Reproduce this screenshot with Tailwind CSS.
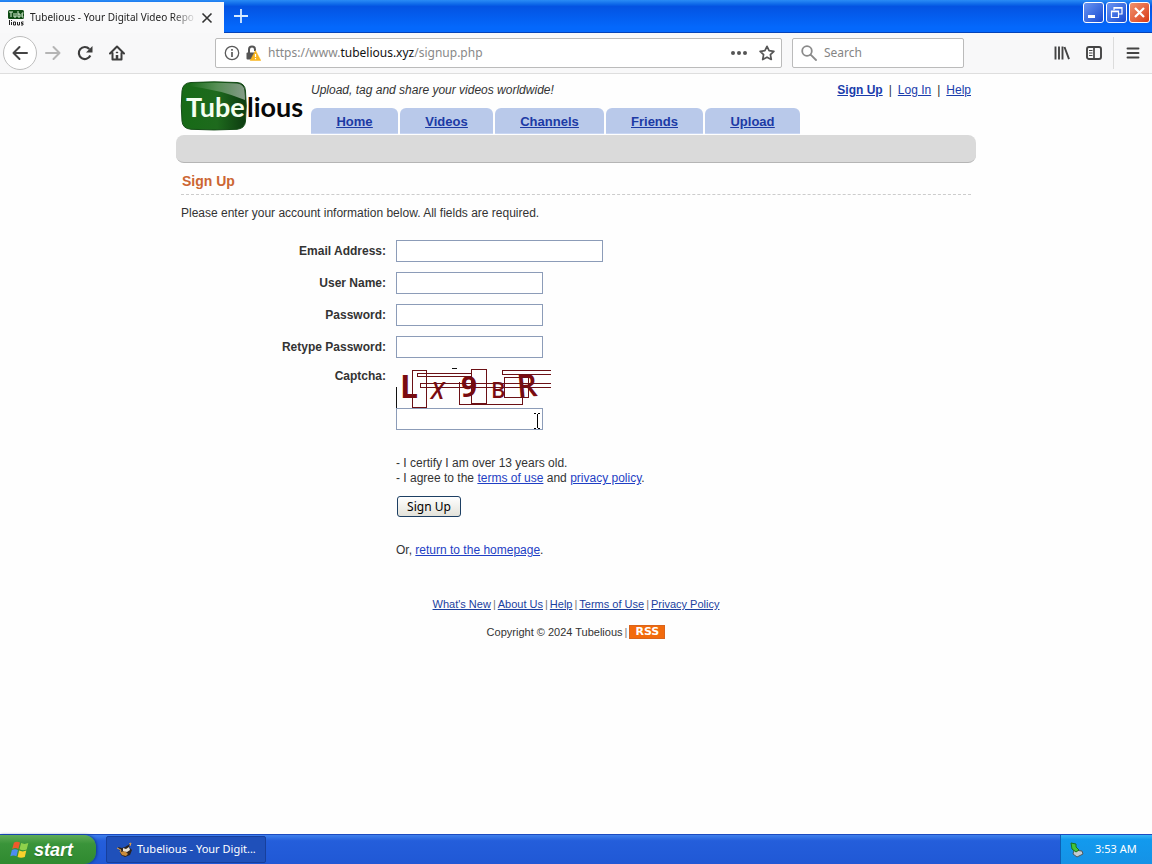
<!DOCTYPE html>
<html lang="en">
<head>
<meta charset="utf-8">
<meta name="viewport" content="width=device-width, initial-scale=1">
<title>Tubelious - Your Digital Video Repository</title>
<script src="https://cdn.jsdelivr.net/npm/@tailwindcss/browser@4"></script>
</head>
<body class="flex min-h-screen flex-col bg-[#fefefe] font-['Liberation_Sans',Arial,sans-serif] text-xs text-[#333]">

<!-- Browser window -->
<div class="flex h-[33px] items-stretch bg-linear-to-b from-[#2a8cf5] from-0% via-[#0453e2] via-20% to-[#0468fc] to-85% border-b border-[#0442b8] font-['Noto_Sans',sans-serif]">
  <div class="mt-0.5 -mb-px flex w-56 items-center bg-[#f9f9fa] pl-2">
    <svg class="h-4 w-4 shrink-0" viewBox="0 0 16 16" aria-hidden="true">
      <rect width="16" height="9" rx="1.5" fill="#0d4a12"/>
      <path d="M1 2h4M3 2v5M6 3v4h2V3M10 1v6h2V4h-2M15.500 7H14V3h1.500M14 5h1" fill="none" stroke="#d8f0d4"/>
      <path d="M1.500 10v5M3.500 12v3M3.500 10v1M5.500 12h2v3h-2zM9.500 12v3h2v-3M15.500 12h-2v1.500h1.500V15h-2" fill="none" stroke="#222"/>
    </svg>
    <span class="ml-1.5 w-[167px] whitespace-nowrap text-[10px] text-[#222] mask-r-from-85%">Tubelious - Your Digital Video Repo</span>
    <button class="flex h-5 w-5 items-center justify-center" aria-label="Close tab">
      <svg class="h-3 w-3" viewBox="0 0 12 12" fill="none" stroke="#333" stroke-width="1.600"><path d="M1.500 1.500l9 9M10.500 1.500l-9 9"/></svg>
    </button>
  </div>
  <button class="ml-px flex w-8 items-center justify-center" aria-label="New tab">
    <svg class="h-4 w-4" viewBox="0 0 16 16" fill="none" stroke="#d8ebff" stroke-width="1.800"><path d="M8 1v14M1 8h14"/></svg>
  </button>
  <div class="ml-auto flex gap-0.5 pt-0.5 pr-0.5">
    <button class="flex h-[21px] w-[21px] items-center justify-center rounded-[3px] border border-white bg-linear-to-br from-[#6a94f2] to-[#1748d0]" aria-label="Minimize">
      <svg class="h-[19px] w-[19px]" viewBox="0 0 19 19"><path d="M4 12h7v3H4z" fill="#fff"/></svg>
    </button>
    <button class="flex h-[21px] w-[21px] items-center justify-center rounded-[3px] border border-white bg-linear-to-br from-[#6a94f2] to-[#1748d0]" aria-label="Restore">
      <svg class="h-[19px] w-[19px]" viewBox="0 0 19 19" fill="none" stroke="#fff" stroke-width="1.200"><path d="M7 7V4.500h8V11h-3M7 5.200h8M4.500 8h7v6.500h-7zM4.500 8.700h7"/></svg>
    </button>
    <button class="flex h-[21px] w-[21px] items-center justify-center rounded-[3px] border border-white bg-linear-to-br from-[#f0916c] to-[#d8360b]" aria-label="Close">
      <svg class="h-[19px] w-[19px]" viewBox="0 0 19 19" fill="none" stroke="#fff" stroke-width="2.200"><path d="M5 5l9 9M14 5l-9 9"/></svg>
    </button>
  </div>
</div>

<div class="flex h-[41px] items-center border-b border-[#dedede] bg-[#f8f8f9] font-['Noto_Sans',sans-serif]">
  <button class="ml-[3px] flex h-[34px] w-[34px] items-center justify-center rounded-full border border-[#bdbdbd] bg-white" aria-label="Back">
    <svg class="h-4 w-4" viewBox="0 0 16 16" fill="none" stroke="#444" stroke-width="2" stroke-linecap="round" stroke-linejoin="round"><path d="M15 8H1.500M7.500 2l-6 6 6 6"/></svg>
  </button>
  <button class="ml-2 flex w-4 justify-center" aria-label="Forward">
    <svg class="h-4 w-4" viewBox="0 0 16 16" fill="none" stroke="#b5b5b5" stroke-width="2" stroke-linecap="round" stroke-linejoin="round"><path d="M1 8h13.500M8.500 2l6 6-6 6"/></svg>
  </button>
  <button class="ml-4 flex w-4 justify-center" aria-label="Reload">
    <svg class="h-4 w-4" viewBox="0 0 16 16"><path d="M13.300 10.500A6 6 0 1 1 12.300 4" fill="none" stroke="#3d3d3d" stroke-width="2.200"/><path d="M15.500 1v6.500H9z" fill="#3d3d3d"/></svg>
  </button>
  <button class="ml-4 flex w-4 justify-center" aria-label="Home">
    <svg class="h-4 w-4" viewBox="0 0 16 16" fill="none" stroke="#3d3d3d" stroke-width="2" stroke-linejoin="round" stroke-linecap="round"><path d="M1 8.500l7-7 7 7M3.500 8v6.500h9V8"/><path d="M8 14v-4" stroke-width="2.500" stroke-linecap="butt"/><path d="M7.500 7.500h1" stroke-width="1.500"/></svg>
  </button>
  <div class="ml-[90px] flex h-[30px] min-w-0 flex-1 items-center rounded-xs border border-[#bbb] bg-white">
    <svg class="ml-2 h-4 w-4 shrink-0" viewBox="0 0 16 16" fill="none" stroke="#5a5a5a"><circle cx="8" cy="8" r="6.700" stroke-width="1.300"/><path d="M8 7v5M8 4v1.700" stroke-width="1.700"/></svg>
    <svg class="ml-[5px] h-4 w-4 shrink-0" viewBox="0 0 16 16"><path d="M4 8V4.500a3 3 0 0 1 6 0V6" fill="none" stroke="#555" stroke-width="2"/><rect x="1.500" y="7.500" width="9" height="7" rx="1" fill="#555"/><path d="M10.500 5.500l5.300 10H5.200z" fill="#f8b51e" stroke="#f8b51e" stroke-width=".5"/><path d="M10.500 9v3M10.500 13v1.300" stroke="#fff" stroke-width="1.200"/></svg>
    <div class="ml-[7px] min-w-0 flex-1 truncate text-xs text-[#888]">https://www.<span class="text-[#111]">tubelious.xyz</span>/signup.php</div>
    <button class="shrink-0" aria-label="Page actions"><svg class="h-4 w-4" viewBox="0 0 16 16" fill="#555"><circle cx="2" cy="8" r="2"/><circle cx="8" cy="8" r="2"/><circle cx="14" cy="8" r="2"/></svg></button>
    <button class="mr-1.5 ml-3 shrink-0" aria-label="Bookmark this page"><svg class="h-4 w-4" viewBox="0 0 16 16" fill="none" stroke="#555" stroke-width="1.700" stroke-linejoin="round"><path d="M8 1.300l2.100 4.400 4.800.6-3.500 3.300.9 4.900L8 12.200l-4.300 2.300.9-4.900L1.100 6.300l4.800-.6z"/></svg></button>
  </div>
  <label class="ml-2.5 flex h-[30px] w-[172px] items-center rounded-xs border border-[#bbb] bg-white">
    <svg class="ml-2 h-4 w-4 shrink-0" viewBox="0 0 16 16" fill="none" stroke="#8a8a8a" stroke-width="1.800" stroke-linecap="round"><circle cx="6" cy="6" r="4.800"/><path d="M9.600 9.600l5.400 5.400"/></svg>
    <input type="text" aria-label="Search" placeholder="Search" class="ml-[7px] w-full min-w-0 bg-transparent text-xs outline-none placeholder:text-[#858585]">
  </label>
  <button class="ml-[90px] shrink-0" aria-label="Library"><svg class="h-4 w-4" viewBox="0 0 16 16" fill="none" stroke="#444" stroke-width="1.900"><path d="M1.500 1.500v13M5 1.500v13M8.500 1.500v13M10.500 2l4.500 12.200"/></svg></button>
  <button class="ml-4 shrink-0" aria-label="Sidebars"><svg class="h-4 w-4" viewBox="0 0 16 16" fill="none" stroke="#444"><rect x="1" y="2" width="14" height="12" rx="2" stroke-width="1.900"/><path d="M8 2v12" stroke-width="1.700"/><path d="M3 5.500h3.500M3 8h3.500M3 10.500h3.500"/></svg></button>
  <div class="ml-[11px] h-[32px] w-px bg-[#dcdcdc]"></div>
  <button class="mr-[11px] ml-[11px] shrink-0" aria-label="Menu"><svg class="h-4 w-4" viewBox="0 0 16 16" fill="none" stroke="#444" stroke-width="1.900" stroke-linecap="round"><path d="M2.500 3.500h11M2.500 8h11M2.500 12.500h11"/></svg></button>
</div>

<!-- Page -->
<div class="mx-auto w-full max-w-[800px] flex-1">
  <header class="flex h-[61px] items-start px-[5px] pt-2">
    <a href="#" aria-label="Tubelious" class="flex h-12 w-[130px] shrink-0">
      <svg class="h-12 w-[122px] overflow-visible" viewBox="0 0 122 48">
        <defs>
          <linearGradient id="logo-base" x1="0" y1="0" x2="1" y2="0"><stop offset="0" stop-color="#176b16"/><stop offset=".55" stop-color="#1e6a1d"/><stop offset="1" stop-color="#0c3a10"/></linearGradient>
          <linearGradient id="logo-shine" x1="0" y1="0" x2="1" y2="0"><stop offset="0" stop-color="#fff" stop-opacity="0"/><stop offset="1" stop-color="#fff" stop-opacity=".5"/></linearGradient>
        </defs>
        <path d="M10 .5Q33-.8 56 .5Q64 1 64.500 9Q66 24 64.500 39Q64 46.500 56 47.300Q33 48.600 10 47.300Q1.500 46.500 1 39Q-.5 24 1 9Q1.500 1 10 .5Z" fill="url(#logo-base)" stroke="#154d17"/>
        <path d="M10 1.500Q33 0 56 1.500Q63 2 63.500 9Q64 14 64 18Q40 8 8 4Z" fill="url(#logo-shine)"/>
        <text x="5" y="35" font-family="Lato,sans-serif" font-size="27" font-weight="700" fill="#f4fff0">Tube</text>
        <text x="66" y="35" font-family="Lato,sans-serif" font-size="27" font-weight="700" fill="#080808">lious</text>
      </svg>
    </a>
    <div class="flex h-[53px] flex-1 flex-col justify-between">
      <div class="flex justify-between leading-4">
        <em>Upload, tag and share your videos worldwide!</em>
        <div class="flex gap-1.5 text-[#333]">
          <a href="#" class="font-bold text-[#1a3cab] underline">Sign Up</a>|<a href="#" class="text-[#1a3cab] underline">Log In</a>|<a href="#" class="text-[#1a3cab] underline">Help</a>
        </div>
      </div>
      <nav class="mb-px flex gap-0.5 text-[13px] font-bold text-[#1c3aa5] underline">
        <a href="#" class="flex h-[26px] w-[87px] items-center justify-center rounded-t-md border-b border-[#c9d6f2] bg-[#b9c9ea] pt-0.5">Home</a>
        <a href="#" class="flex h-[26px] w-[93px] items-center justify-center rounded-t-md border-b border-[#c9d6f2] bg-[#b9c9ea] pt-0.5">Videos</a>
        <a href="#" class="flex h-[26px] w-[109px] items-center justify-center rounded-t-md border-b border-[#c9d6f2] bg-[#b9c9ea] pt-0.5">Channels</a>
        <a href="#" class="flex h-[26px] w-[97px] items-center justify-center rounded-t-md border-b border-[#c9d6f2] bg-[#b9c9ea] pt-0.5">Friends</a>
        <a href="#" class="flex h-[26px] w-[95px] items-center justify-center rounded-t-md border-b border-[#c9d6f2] bg-[#b9c9ea] pt-0.5">Upload</a>
      </nav>
    </div>
  </header>
  <div class="h-7 rounded-lg border-b border-[#b5b5b5] bg-[#dadada]"></div>

  <main class="px-[5px]">
    <h1 class="border-b border-dashed border-[#ccc] pt-2 pb-[3px] text-sm font-bold leading-5 text-[#cc6633] indent-px">Sign Up</h1>
    <p class="pt-2.5 leading-4">Please enter your account information below. All fields are required.</p>

    <form class="grid grid-cols-[205px_1fr] items-center gap-x-2.5 gap-y-2.5 pt-[19px]">
      <label for="email" class="text-right font-bold">Email Address:</label>
      <input id="email" type="email" class="h-[22px] w-[207px] border border-[#8c9cb8] bg-white px-1">
      <label for="user" class="text-right font-bold">User Name:</label>
      <input id="user" type="text" class="h-[22px] w-[147px] border border-[#8c9cb8] bg-white px-1">
      <label for="pass" class="text-right font-bold">Password:</label>
      <input id="pass" type="password" class="h-[22px] w-[147px] border border-[#8c9cb8] bg-white px-1">
      <label for="pass2" class="text-right font-bold">Retype Password:</label>
      <input id="pass2" type="password" class="h-[22px] w-[147px] border border-[#8c9cb8] bg-white px-1">
      <label for="captcha" class="self-start text-right font-bold">Captcha:</label>
      <div class="relative">
        <svg class="h-10 w-[155px] overflow-visible" viewBox="0 0 155 40" role="img" aria-label="Captcha image">
          <g font-family="'Open Sans',sans-serif" font-weight="700" fill="#7a0b10">
            <text x="4" y="30" font-size="32">L</text>
            <text x="35" y="31" font-size="23" font-weight="600" font-style="italic">X</text>
            <text x="65" y="29" font-size="28">9</text>
            <text x="95" y="30" font-size="22" font-weight="600">B</text>
            <text x="121" y="29" font-size="32" font-weight="600" transform="rotate(-5 131 20)">R</text>
          </g>
          <g fill="none" stroke="#6b1015" shape-rendering="crispEdges">
            <path d="M16.500 2.500h14v37h-14zM21.500 5.500h54v3h-54zM155 2.500h-49v4h49M155 15.500H24.500v4H155M75.500 1.500h15v34h-15zM63.500 14v22.500h63V14M108.500 9.500h24v20h-24z"/>
            <path d="M.5 19v21M56 .5h5" stroke="#111"/>
          </g>
        </svg>
        <input id="captcha" type="text" class="block h-[22px] w-[147px] border border-[#8c9cb8] bg-white px-1">
        <svg class="absolute top-[45px] left-[137px] h-4 w-2" viewBox="0 0 8 16" fill="none" stroke="#000" shape-rendering="crispEdges" aria-hidden="true"><path d="M1 .5h2M5 .5h2M1 15.500h2M5 15.500h2M4.500 1v14"/></svg>
      </div>
      <div class="col-start-2 pt-4 leading-[15px]">
        <p>- I certify I am over 13 years old.</p>
        <p>- I agree to the <a href="#" class="text-[#1f3fc4] underline">terms of use</a> and <a href="#" class="text-[#1f3fc4] underline">privacy policy</a>.</p>
        <button type="button" class="mt-2.5 ml-px block h-[21px] w-16 rounded-[3px] border border-[#1d3f63] bg-linear-to-b from-white to-[#e3e2da] font-['Noto_Sans',sans-serif] text-xs text-black leading-[18px]">Sign Up</button>
        <p class="mt-[26px]">Or, <a href="#" class="text-[#1f3fc4] underline">return to the homepage</a>.</p>
      </div>
    </form>
  </main>

  <footer class="flex flex-col items-center gap-3 pt-[38px] text-[11px] leading-4">
    <div class="flex gap-0.5 text-[#777]">
      <a href="#" class="text-[#1b3f9e] underline">What's New</a>|<a href="#" class="text-[#1b3f9e] underline">About Us</a>|<a href="#" class="text-[#1b3f9e] underline">Help</a>|<a href="#" class="text-[#1b3f9e] underline">Terms of Use</a>|<a href="#" class="text-[#1b3f9e] underline">Privacy Policy</a>
    </div>
    <div class="flex items-center gap-0.5">
      <span>Copyright © 2024 Tubelious</span><span class="text-[#777]">|</span>
      <a href="#" class="flex h-3.5 w-9 items-center justify-center border border-[#d9641c] bg-[#f26a0c] font-['DejaVu_Sans',sans-serif] font-bold leading-3 text-white">RSS</a>
    </div>
  </footer>
</div>

<!-- Taskbar -->
<div class="flex h-[30px] items-stretch border-t border-[#1c4bc0] bg-linear-to-b from-[#3f80ec] from-0% via-[#245edb] via-20% to-[#2058d5]">
  <button class="flex w-24 items-center gap-1 rounded-r-xl bg-linear-to-b from-[#5eac56] via-[#3a943a] via-30% to-[#2f8a30] pl-2.5 text-lg font-bold italic text-white shadow-[1px_0_3px_#0d3a8a] text-shadow-sm">
    <svg class="h-5 w-5" viewBox="0 0 18 18" aria-hidden="true"><path d="M3.500 2.500Q6 .8 9 2.300L7.500 8Q5 6.500 2 8z" fill="#ee5a2c"/><path d="M10 2.800Q13 4.300 16.500 2.800L15 8.500Q12 10 8.500 8.400z" fill="#8fd14b"/><path d="M1.700 9Q4.500 7.500 7.200 9L5.800 14.700Q3 13.200.3 14.700z" fill="#4d8cf0"/><path d="M8.200 9.500Q11.500 11 14.700 9.500L13.300 15.200Q10 16.700 6.800 15.200z" fill="#fbd12d"/></svg>
    start
  </button>
  <button class="my-px ml-2.5 flex w-40 items-center gap-1 rounded-xs border border-[#173f9c] bg-[#1f50ba] pl-2.5 font-['Noto_Sans',sans-serif] text-[11px] text-white">
    <svg class="h-4 w-4" viewBox="0 0 16 16" aria-hidden="true"><path d="M1 5l4 1 3-1 5-3-1 3 3 3-2 5-5 2-4-2-1-4z" fill="#2b2320"/><path d="M3 10l5-1 3 3-2 2-4-1z" fill="#c98b3a"/><path d="M6 6l3 1 3-2 1 3-3 2-4-1z" fill="#e8e2d8"/><path d="M0 6l4 2-1 2M12 2l2-1-1 3" stroke="#e0a04a" fill="none"/></svg>
    Tubelious - Your Digit...
  </button>
  <div class="ml-auto flex w-[92px] items-center border-l border-[#0d5fb5] bg-linear-to-b from-[#35b5f5] from-0% via-[#129aee] via-15% to-[#1592e6] pl-2 font-['Noto_Sans',sans-serif] text-[11px] text-white">
    <svg class="h-4 w-4" viewBox="0 0 16 16" aria-hidden="true"><path d="M5 8l8 1 1 3-6 3-4-3z" fill="#c4ccd0" stroke="#4b5963"/><path d="M2 1l5 1v3l3 3-3 2-4-3z" fill="#43c53a" stroke="#19741b"/></svg>
    <span class="ml-2.5">3:53 AM</span>
  </div>
</div>
</body>
</html>
